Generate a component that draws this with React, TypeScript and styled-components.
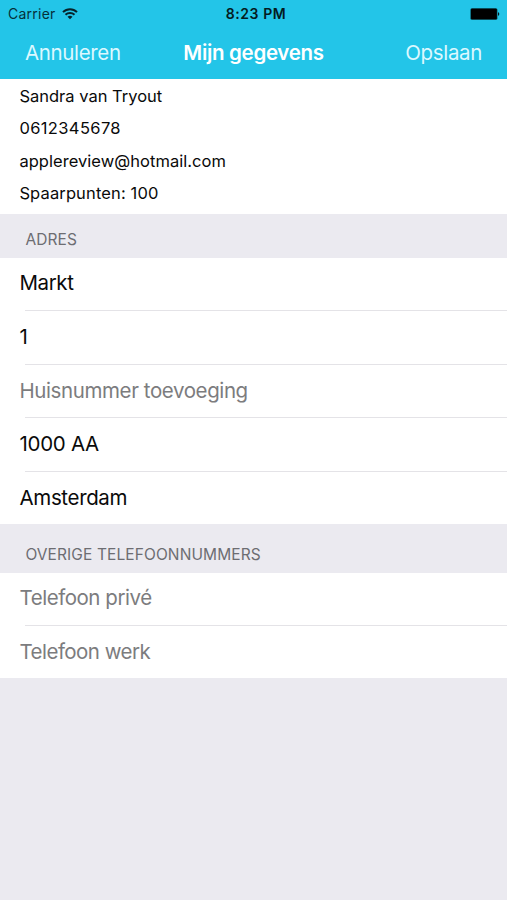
import React from "react";
import styled, { createGlobalStyle } from "styled-components";

const GlobalStyle = createGlobalStyle`
  * { box-sizing: border-box; }
  body { margin: 0; background: #ebeaf0; font-family: Inter, "Liberation Sans", sans-serif; color: #000; }
`;

const Screen = styled.main`
  display: flex;
  flex-direction: column;
  width: 507px;
  height: 900px;
  background: #ebeaf0;
`;

const Header = styled.header`
  height: 79px;
  background: #23c5e8;
`;

const StatusBar = styled.div`
  display: grid;
  grid-template-columns: 1fr auto 1fr;
  align-items: center;
  height: 27px;
  padding: 0 7px 0 8px;
`;

const Carrier = styled.div`
  display: flex;
  align-items: center;
  gap: 6px;
`;

const Label = styled.span<{ $size: number; $track?: number; $weight?: number; $color?: string }>`
  display: block;
  font-size: ${(p) => p.$size}px;
  letter-spacing: ${(p) => p.$track ?? 0}px;
  font-weight: ${(p) => p.$weight ?? 400};
  color: ${(p) => p.$color ?? "#0a0a0a"};
  line-height: 24px;
  white-space: nowrap;
`;

const Clock = styled(Label)`
  margin-left: 4px;
`;

const BatterySlot = styled.div`
  display: flex;
  justify-content: flex-end;
`;

const NavBar = styled.nav`
  display: grid;
  grid-template-columns: 1fr auto 1fr;
  align-items: center;
  height: 52px;
  padding: 0 25px 1px 25px;
`;

const NavButton = styled.button<{ $end?: boolean }>`
  justify-self: ${(p) => (p.$end ? "end" : "start")};
  padding: 0;
  border: 0;
  background: none;
  font-family: inherit;
`;

const Profile = styled.section`
  height: 135px;
  padding: 1px 0 0 19.4px;
  background: #fff;
`;

const ProfileLine = styled.div`
  display: flex;
  align-items: center;
  height: 32.3px;
`;

const SectionTitle = styled.h2<{ $height: number }>`
  display: flex;
  align-items: flex-end;
  height: ${(p) => p.$height}px;
  margin: 0;
  padding: 0 25px 6px 25.4px;
`;

const Group = styled.section`
  background: #fff;
`;

const Row = styled.div<{ $height: number }>`
  display: flex;
  align-items: center;
  height: ${(p) => p.$height}px;
  padding: 0 0 2px 19.5px;
  & + & {
    padding-bottom: 0;
    background: linear-gradient(#e4e3e7, #e4e3e7) 25px 0 / 100% 1px no-repeat;
  }
`;

const profile = [
  { text: "Sandra van Tryout", track: 0 },
  { text: "0612345678", track: 0.37 },
  { text: "applereview@hotmail.com", track: 0.04 },
  { text: "Spaarpunten: 100", track: 0.13 },
];

const address = [
  { text: "Markt", track: -0.4, height: 52 },
  { text: "1", track: 0, height: 54 },
  { text: "Huisnummer toevoeging", track: -0.4, hint: true, height: 53 },
  { text: "1000 AA", track: -0.3, height: 54 },
  { text: "Amsterdam", track: -0.35, height: 53 },
];

const phones = [
  { text: "Telefoon privé", track: -0.46, height: 52 },
  { text: "Telefoon werk", track: -0.53, height: 53 },
];

function Wifi() {
  return (
    <svg width="16" height="12" viewBox="0 0 16 12" fill="none" stroke="#06232b" strokeWidth="2">
      <path d="M1 4.1C5 .2 11 .2 15 4.1M3.5 6.8C6 4.5 10 4.5 12.5 6.8" />
      <path d="M8 11.2 5.5 8.7Q8 6.9 10.5 8.7Z" fill="#06232b" stroke="none" />
    </svg>
  );
}

function Battery() {
  return (
    <svg width="30" height="12" viewBox="0 0 30 12">
      <rect x=".4" y=".2" width="27" height="11.6" rx="1.5" fill="#08444f" />
      <rect x="1" y=".8" width="25.8" height="10.4" rx="1" fill="#000" />
      <path d="M28 4Q30.6 6 28 8Z" fill="#04181d" />
    </svg>
  );
}

export default function App() {
  return (
    <>
      <GlobalStyle />
      <Screen>
        <Header>
          <StatusBar>
            <Carrier><Label $size={14} $track={0.25} $color="#06303a">Carrier</Label><Wifi /></Carrier>
            <Clock $size={14} $track={0.55} $weight={600} $color="#031c22">8:23 PM</Clock>
            <BatterySlot><Battery /></BatterySlot>
          </StatusBar>
          <NavBar>
            <NavButton><Label $size={20.5} $track={-0.35} $color="#dcf8ff">Annuleren</Label></NavButton>
            <Label $size={20.5} $track={-0.32} $weight={600} $color="#fff">Mijn gegevens</Label>
            <NavButton $end><Label $size={20.5} $track={-0.35} $color="#dcf8ff">Opslaan</Label></NavButton>
          </NavBar>
        </Header>
        <Profile>
          {profile.map((p) => <ProfileLine key={p.text}><Label $size={16.5} $track={p.track}>{p.text}</Label></ProfileLine>)}
        </Profile>
        <SectionTitle $height={44}><Label $size={15.5} $track={0.1} $color="#6d6d72">ADRES</Label></SectionTitle>
        <Group>
          {address.map((r) => <Row key={r.text} $height={r.height}><Label $size={20.5} $track={r.track} $color={r.hint ? "#7c7c7e" : undefined}>{r.text}</Label></Row>)}
        </Group>
        <SectionTitle $height={49}><Label $size={15.5} $track={0.1} $color="#6d6d72">OVERIGE TELEFOONNUMMERS</Label></SectionTitle>
        <Group>
          {phones.map((r) => <Row key={r.text} $height={r.height}><Label $size={20.5} $track={r.track} $color="#7c7c7e">{r.text}</Label></Row>)}
        </Group>
      </Screen>
    </>
  );
}
